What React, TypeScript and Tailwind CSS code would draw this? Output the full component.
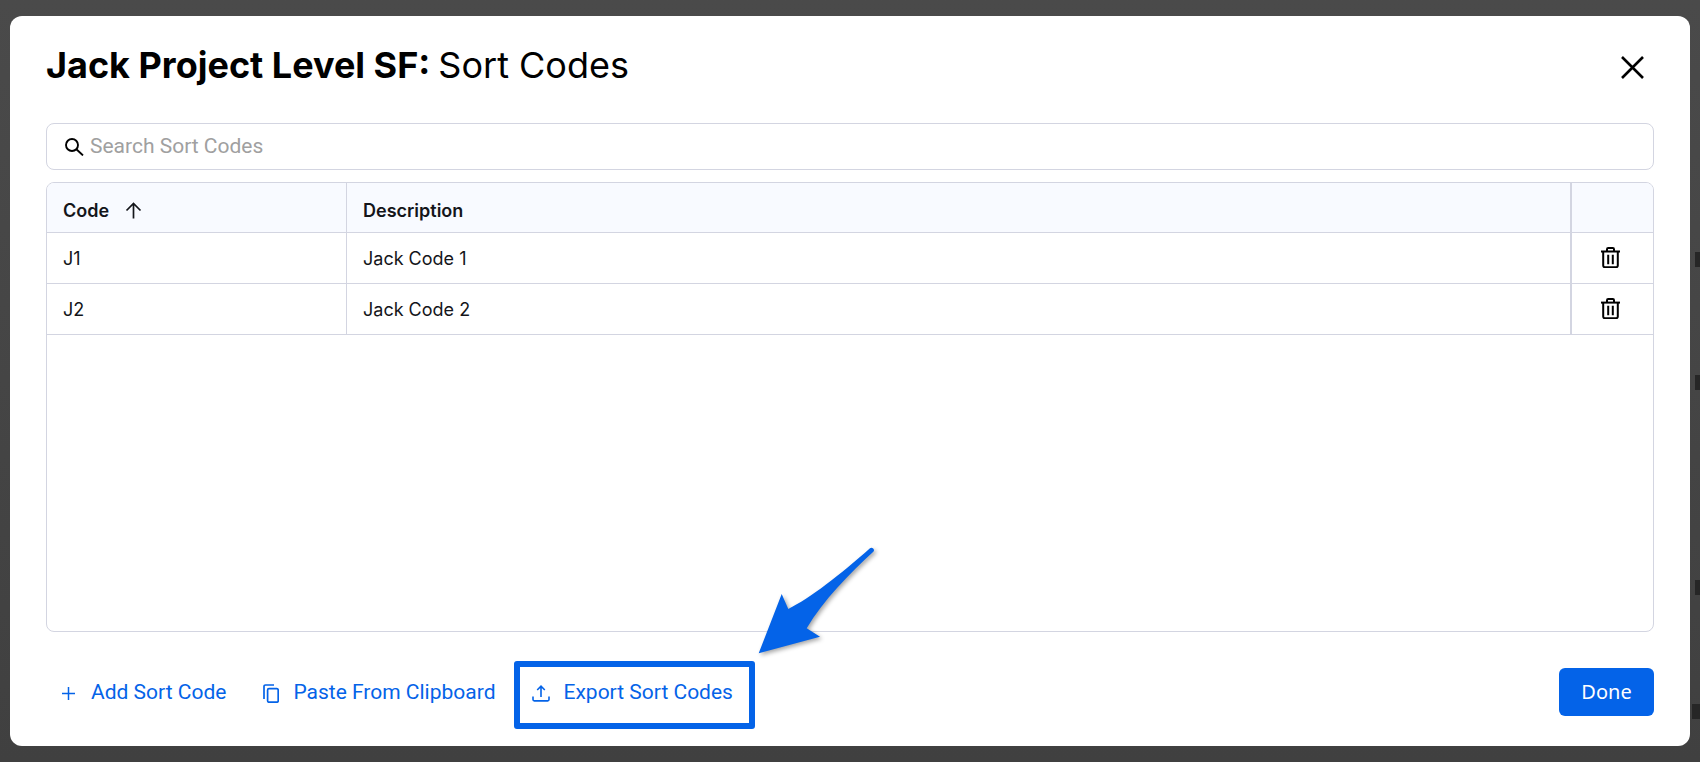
import React from "react";

const BLUE = "#0463e8";

function Trash() {
  return (
    <svg width="19" height="21" viewBox="0 0 19 21" fill="none" stroke="#000" strokeWidth="2">
      <path d="M0 4.6h19" />
      <path d="M6 4.4V2.2C6 1.4 6.5 1 7.2 1h4.6c.7 0 1.2.4 1.2 1.2v2.2" />
      <path d="M2.2 4.6v14c0 1 .6 1.6 1.6 1.6h11.4c1 0 1.6-.6 1.6-1.6v-14" />
      <path d="M7.2 7.8v9.4M11.8 7.8v9.4" />
    </svg>
  );
}

function Row({ code, desc }: { code: string; desc: string }) {
  return (
    <div className="flex h-[51px] border-b border-[#d3d5e1] text-[18px] text-[#14151a]">
      <div className="flex w-[300px] items-center border-r border-[#d3d5e1] pl-[16px]">{code}</div>
      <div className="flex flex-1 items-center border-r-2 border-[#d3d5e1] pl-[16px]">{desc}</div>
      <div className="flex w-[81px] items-center justify-center pr-[4px] pb-[2px]">
        <Trash />
      </div>
    </div>
  );
}

function Speck({ className }: { className: string }) {
  return <div className={`absolute h-[15px] bg-[#262626] ${className}`} />;
}

export default function App() {
  return (
    <div className="relative flex h-[762px] w-[1700px] overflow-hidden bg-gradient-to-b from-[#4a4a4a] to-[#404040] pt-[16px] pl-[10px] font-['Inter',sans-serif]">
      <Speck className="top-[252px] left-[1695px] w-[5px]" />
      <Speck className="top-[375px] left-[1695px] w-[5px]" />
      <Speck className="top-[580px] left-[1695px] w-[5px]" />
      <Speck className="top-[704px] left-[1692px] w-[8px]" />
      <div className="relative flex h-[730px] w-[1680px] flex-col rounded-[12px] bg-white px-[36px]">
        <div className="flex h-[107px] items-start justify-between">
          <h1 className="mt-[28px] flex gap-[8px] text-[36px] leading-[42px] text-black">
            <span className="font-bold">Jack Project Level SF:</span>
            <span className="font-normal">Sort Codes</span>
          </h1>
          <svg className="mt-[40px] mr-[10px]" width="23" height="23" viewBox="0 0 23 23" stroke="#000" strokeWidth="2.6" fill="none">
            <path d="M1 1l21 21M22 1L1 22" />
          </svg>
        </div>
        <div className="flex h-[47px] items-center rounded-[8px] border border-[#d3d5e1] pl-[18px]">
          <svg width="19" height="18" viewBox="0 0 19 18" fill="none" stroke="#000" strokeWidth="1.9">
            <ellipse cx="7" cy="7" rx="6" ry="6" />
            <path d="M11.4 11.2L18 17.4" />
          </svg>
          <span className="ml-[6px] font-['Roboto',sans-serif] text-[21px] text-[#a0a0a0]">Search Sort Codes</span>
        </div>
        <div className="mt-[12px] h-[450px] overflow-hidden rounded-[8px] border border-[#d3d5e1]">
          <div className="flex h-[50px] border-b border-[#d3d5e1] bg-[#f8faff] text-[18px] font-semibold text-[#14151a]">
            <div className="flex w-[300px] items-center gap-[16px] border-r border-[#d3d5e1] pt-[6px] pl-[16px]">
              Code
              <svg width="17" height="17" viewBox="0 0 17 17" fill="none" stroke="#14151a" strokeWidth="1.7">
                <path d="M8.5 16.5V1.5M1.5 8.5L8.5 1.5L15.5 8.5" />
              </svg>
            </div>
            <div className="flex flex-1 items-center border-r-2 border-[#d3d5e1] pt-[6px] pl-[16px]">Description</div>
            <div className="w-[81px]" />
          </div>
          <Row code="J1" desc="Jack Code 1" />
          <Row code="J2" desc="Jack Code 2" />
        </div>
        <div className="mt-[36px] flex h-[48px] items-center justify-between font-['Roboto',sans-serif] text-[21px] text-[#0463e8]">
          <div className="flex items-center pt-[2px] pl-[16px]">
            <svg width="13" height="13" viewBox="0 0 13 13" stroke={BLUE} strokeWidth="1.5" fill="none">
              <path d="M6.5 0v13M0 6.5h13" />
            </svg>
            <span className="ml-[16px]">Add Sort Code</span>
            <svg className="ml-[37px]" width="16" height="19" viewBox="0 0 16 19" fill="none" stroke={BLUE} strokeWidth="1.7">
              <path d="M1 15V2.5C1 1.6 1.6 1 2.5 1H11" />
              <rect x="4.6" y="4.6" width="10.6" height="13.6" rx="1.4" />
            </svg>
            <span className="ml-[14px]">Paste From Clipboard</span>
            <svg className="ml-[37px]" width="18" height="17" viewBox="0 0 18 17" fill="none" stroke={BLUE} strokeWidth="1.6">
              <path d="M9 12V1.5M5.2 5L9 1.2L12.8 5" />
              <path d="M1 11.5V14.6c0 .8.5 1.3 1.3 1.3h13.4c.8 0 1.3-.5 1.3-1.3V11.5" />
            </svg>
            <span className="ml-[13px]">Export Sort Codes</span>
          </div>
          <button className="h-[48px] w-[95px] rounded-[6px] bg-[#0463e8] font-['Noto_Sans',sans-serif] text-[20px] text-white">Done</button>
        </div>
        <div className="absolute top-[645px] left-[504px] h-[68px] w-[241px] rounded-[3px] border-[6px] border-[#0463e8]" />
        <svg className="absolute top-[527px] left-[748px]" width="130" height="125" viewBox="0 0 130 125" fill={BLUE} style={{ filter: "drop-shadow(2px 2px 2px rgba(0,0,0,.35))" }}>
          <path d="M0.7 110.3 L23.7 51 L30.3 66 C52 55.3 82 32 112 5.3 C114 3.5 117.5 6.5 115.3 8.7 C92 30.3 65.3 57 48.7 85.3 L62 93.7 Z" />
        </svg>
      </div>
    </div>
  );
}
